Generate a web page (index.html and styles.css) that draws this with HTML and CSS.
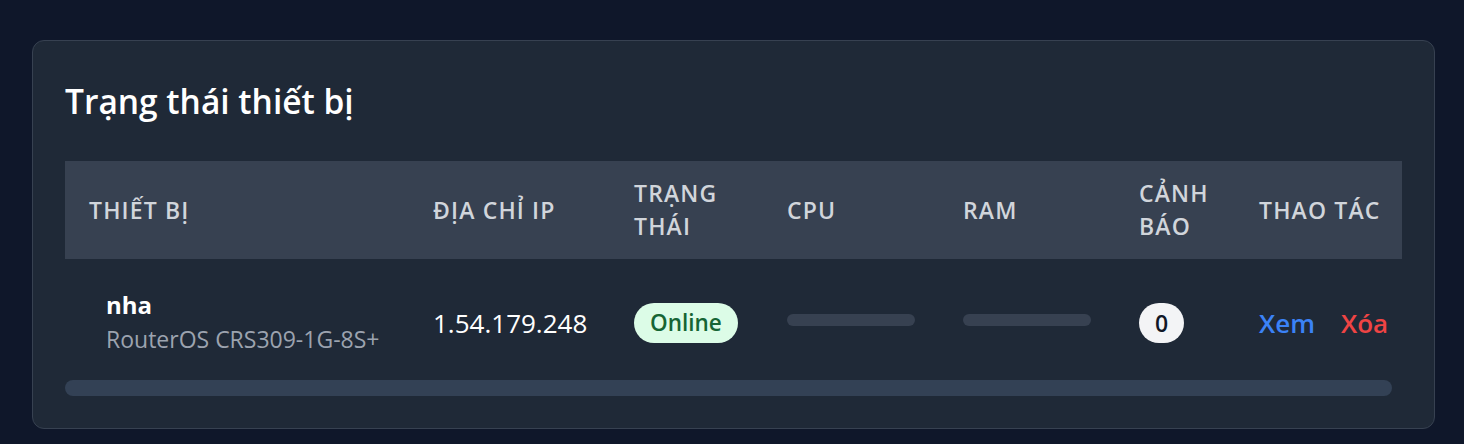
FILE: index.html
```html
<!DOCTYPE html>
<html lang="vi">
<head>
<meta charset="utf-8">
<title>Trạng thái thiết bị</title>
<link rel="stylesheet" href="styles.css">
</head>
<body>
<section class="card">
  <h2 class="card-title">Trạng thái thiết bị</h2>
  <div class="table-wrap">
    <table class="devices">
      <thead>
        <tr>
          <th class="col-device">Thiết bị</th>
          <th class="col-ip">Địa chỉ IP</th>
          <th class="col-status">Trạng thái</th>
          <th class="col-cpu">CPU</th>
          <th class="col-ram">RAM</th>
          <th class="col-alert">Cảnh báo</th>
          <th class="col-actions">Thao tác</th>
        </tr>
      </thead>
      <tbody>
        <tr>
          <td class="cell-device">
            <div class="device-name">nha</div>
            <div class="device-model">RouterOS CRS309-1G-8S+</div>
          </td>
          <td class="cell-ip">1.54.179.248</td>
          <td><span class="pill-online">Online</span></td>
          <td><div class="meter"></div></td>
          <td><div class="meter"></div></td>
          <td><span class="badge">0</span></td>
          <td class="cell-actions"><a class="link-view" href="#">Xem</a><a class="link-delete" href="#">Xóa</a></td>
        </tr>
      </tbody>
    </table>
    <div class="scroll-track"><div class="scroll-thumb"></div></div>
  </div>
</section>
</body>
</html>
```

FILE: styles.css
```css
* { box-sizing: border-box; }

html, body {
  margin: 0;
  padding: 0;
}

body {
  background: #0f172a;
  font-family: "Open Sans", "Noto Sans", "Liberation Sans", sans-serif;
  color: #ffffff;
  padding: 40px 29px 0 32px;
  min-height: 444px;
}

.card {
  background: #1f2937;
  border: 1px solid #374151;
  border-radius: 12px;
  padding: 40px 32px 32px 32px;
}

.card-title {
  margin: 0 0 40px 0;
  font-size: 33.5px;
  line-height: 40px;
  font-weight: 600;
  color: #ffffff;
}

.devices {
  width: 100%;
  border-collapse: collapse;
  table-layout: fixed;
}

.devices th {
  background: #374151;
  color: #d1d5db;
  font-size: 23px;
  line-height: 33px;
  font-weight: 600;
  letter-spacing: 0.05em;
  text-transform: uppercase;
  text-align: left;
  padding: 16px 24px;
  vertical-align: middle;
}

.col-device { width: 344px; }
.col-ip { width: 201px; }
.col-status { width: 153px; }
.col-cpu { width: 176px; }
.col-ram { width: 176px; }
.col-alert { width: 120px; }
.devices th.col-actions {
  white-space: nowrap;
  padding-right: 0;
}

.devices td {
  padding: 29px 24px 23px 24px;
  vertical-align: middle;
}

.devices td.cell-device {
  padding-left: 41px;
}

.device-name {
  font-size: 24px;
  line-height: 34px;
  font-weight: 700;
  color: #ffffff;
}

.device-model {
  font-size: 23px;
  line-height: 35px;
  color: #9ca3af;
  white-space: nowrap;
}

.cell-ip {
  font-size: 26px;
  color: #ffffff;
  white-space: nowrap;
}

.pill-online {
  display: inline-block;
  height: 40px;
  line-height: 40px;
  padding: 0 16px;
  border-radius: 20px;
  background: #dcfce7;
  color: #166534;
  font-size: 22.5px;
  font-weight: 600;
}

.meter {
  width: 128px;
  height: 12px;
  border-radius: 6px;
  background: #374151;
  margin-top: -6px;
}

.badge {
  display: inline-flex;
  align-items: center;
  justify-content: center;
  width: 45px;
  height: 40px;
  border-radius: 20px;
  background: #f3f4f6;
  color: #111827;
  font-size: 23px;
  font-weight: 600;
}

.cell-actions {
  white-space: nowrap;
}

.link-view,
.link-delete {
  font-size: 26px;
  font-weight: 600;
  text-decoration: none;
}

.link-view {
  color: #3b82f6;
  margin-right: 26px;
}

.link-delete {
  color: #ef4444;
}

.scroll-track {
  height: 16px;
  padding-right: 10px;
}

.scroll-thumb {
  height: 16px;
  border-radius: 8px;
  background: #334155;
}
```
